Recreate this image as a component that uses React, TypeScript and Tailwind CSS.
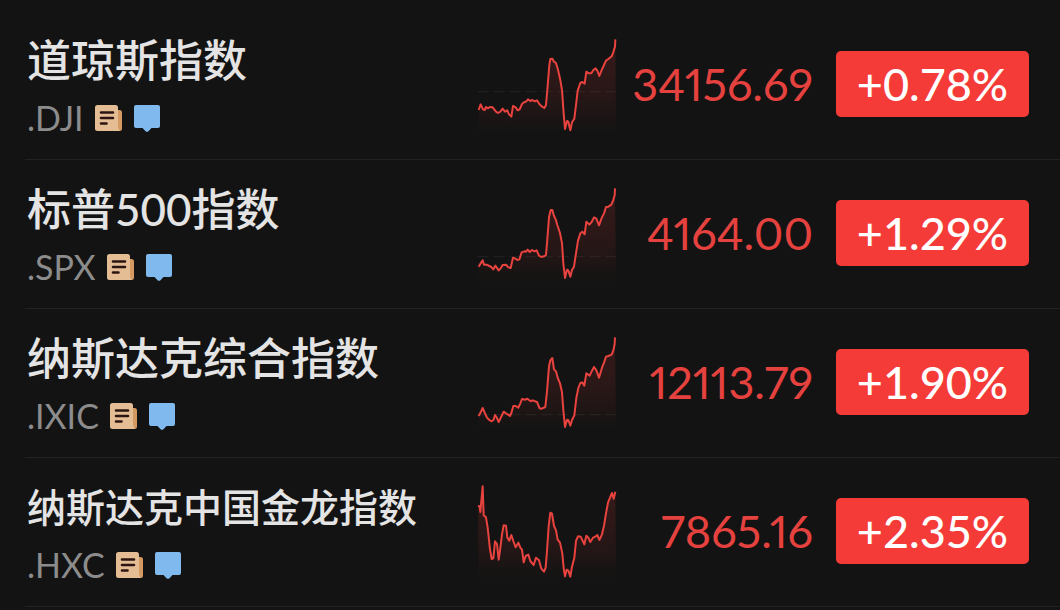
import React from "react";

type Quote = {
  name: string;
  code: string;
  price: string;
  change: string;
  compact?: boolean;
  chartTop: number;
  baseline: number;
  points: string;
};

const quotes: Quote[] = [
  {
    name: "道琼斯指数",
    code: ".DJI",
    price: "34156.69",
    change: "+0.78%",
    chartTop: 15,
    baseline: 185,
    points:
      "26,240 32,223 39,238 44,240 48,231 53,235 60,231 68,232 78,245 84,249 91,245 98,236 105,245 112,241 117,253 124,260 129,228 137,232 143,241 149,238 156,222 163,216 168,215 174,208 181,213 187,210 194,214 201,211 208,222 215,229 223,234 228,225 232,180 238,105 241,87 247,86 252,95 258,99 264,119 271,151 276,180 281,250 285,297 291,273 295,275 301,301 306,277 313,266 318,225 323,182 331,159 337,156 344,161 349,125 356,130 364,130 370,120 377,115 383,124 388,138 395,120 402,105 408,92 415,87 425,79 430,66 435,50 436,28",
  },
  {
    name: "标普500指数",
    code: ".SPX",
    price: "4164.00",
    change: "+1.29%",
    chartTop: 12,
    baseline: 230,
    points:
      "26,260 32,250 38,241 42,254 50,254 58,258 64,261 70,268 76,257 86,271 92,265 98,255 108,254 115,262 122,264 129,233 136,236 142,240 148,238 155,217 163,214 168,215 173,209 179,216 186,210 193,214 200,211 207,227 214,231 222,229 228,225 232,177 237,112 242,90 247,90 252,108 257,118 262,135 270,159 276,190 280,250 285,294 291,269 295,271 301,290 306,270 312,260 318,220 324,182 331,160 337,155 344,163 349,125 358,134 365,126 372,112 379,116 387,136 395,114 402,100 408,81 415,80 424,74 430,60 434,45 435,25",
  },
  {
    name: "纳斯达克综合指数",
    code: ".IXIC",
    price: "12113.79",
    change: "+1.90%",
    chartTop: 15,
    baseline: 260,
    points:
      "26,264 32,253 38,240 44,254 51,269 58,276 65,280 71,275 75,261 80,268 86,282 92,270 101,251 109,257 120,264 125,252 130,234 137,234 145,239 151,226 156,213 166,215 172,212 182,220 188,217 201,222 209,241 215,242 226,237 231,190 237,115 241,97 247,90 252,124 258,130 263,149 270,166 276,193 280,246 285,297 291,275 295,276 301,293 306,276 313,262 319,210 325,180 331,165 337,163 343,173 349,136 359,143 366,128 372,117 379,127 387,149 396,119 402,104 408,86 415,84 425,80 430,67 434,48 435,28",
  },
  {
    name: "纳斯达克中国金龙指数",
    code: ".HXC",
    price: "7865.16",
    change: "+2.35%",
    compact: true,
    chartTop: 18,
    baseline: 330,
    points:
      "24,90 29,91 31,108 34,75 38,31 41,118 48,124 53,155 60,220 65,249 70,247 75,196 81,204 86,251 90,224 96,175 101,148 108,149 112,185 118,194 124,177 131,198 137,214 145,200 151,215 156,221 161,259 167,240 175,236 181,255 191,267 198,245 207,253 214,278 222,287 227,275 231,225 236,150 241,110 246,113 252,150 258,163 263,191 270,200 277,233 281,276 285,301 290,281 295,284 301,302 306,272 313,245 318,195 324,181 332,182 343,205 349,179 355,185 361,198 369,185 376,182 382,177 388,192 396,175 402,149 408,112 414,80 422,60 426,51 431,68 436,47",
  },
];

function NewsIcon() {
  return (
    <svg className="h-[26px] w-7 shrink-0" viewBox="0 0 28 26" aria-hidden="true">
      <path d="M21 5h3.5A2.5 2.5 0 0 1 27 7.500V23.500A2.500 2.500 0 0 1 24.500 26H21z" fill="#d49a62" />
      <path d="M2.500 0H20.500A2.500 2.500 0 0 1 23 2.500V21q0 3 2 5H2.500A2.500 2.500 0 0 1 0 23.500V2.500A2.500 2.500 0 0 1 2.500 0z" fill="#e5bd95" />
      <path d="M6 7.500H18M6 13H18M6 18.500H11.500" stroke="#2b1512" strokeWidth="2.6" strokeLinecap="round" />
    </svg>
  );
}

function CommentIcon() {
  return (
    <svg className="h-[27px] w-[26px] shrink-0" viewBox="0 0 26 27" aria-hidden="true">
      <path
        d="M2 0H24A2 2 0 0 1 26 2V21A2 2 0 0 1 24 23H17.500L14.500 26.200Q13 27.500 11.500 26.200L8.500 23H2A2 2 0 0 1 0 21V2A2 2 0 0 1 2 0z"
        fill="#80b9ee"
      />
    </svg>
  );
}

function Sparkline({ quote }: { quote: Quote }) {
  const gradient = `fill${quote.code.replace(".", "-")}`;
  return (
    <svg
      className="mt-6 h-[100px] w-[138px] shrink-0 overflow-visible"
      viewBox={`24 ${quote.chartTop} 414 300`}
      aria-hidden="true"
    >
      <defs>
        <linearGradient id={gradient} gradientUnits="userSpaceOnUse" x1="0" y1="30" x2="0" y2="310">
          <stop offset="0" stopColor="#f23c3a" stopOpacity="0.17" />
          <stop offset="0.6" stopColor="#f23c3a" stopOpacity="0.09" />
          <stop offset="1" stopColor="#f23c3a" stopOpacity="0" />
        </linearGradient>
      </defs>
      {quote.baseline < 310 && (
        <path d={`M22 ${quote.baseline}H438`} stroke="#ffffff" strokeOpacity="0.06" strokeWidth="4" strokeDasharray="34 14" />
      )}
      <polygon points={`26,310 ${quote.points} 438,310`} fill={`url(#${gradient})`} />
      <polyline points={quote.points} fill="none" stroke="#e9433f" strokeWidth="6" strokeLinejoin="round" />
    </svg>
  );
}

function QuoteRow({ quote }: { quote: Quote }) {
  return (
    <li className="flex items-start border-b border-[#222222] pr-[31px] pb-[21px]">
      <div className="min-w-0 flex-1 pt-[25px] pl-0.5">
        <h2
          className={`whitespace-nowrap leading-[48px] font-medium text-[#e4e4e4] ${quote.compact ? "text-[39px]" : "text-[44px]"}`}
        >
          {quote.name}
        </h2>
        <div className="mt-3.5 flex items-center gap-[11px]">
          <span className="text-[34px] leading-10 text-[#8c8c8c]">{quote.code}</span>
          <NewsIcon />
          <CommentIcon />
        </div>
      </div>
      <Sparkline quote={quote} />
      <span className="mt-10 w-[197px] shrink-0 text-right text-[45px] leading-[66px] proportional-nums text-[#e5423f]">
        {quote.price}
      </span>
      <span className="mt-10 ml-[23px] w-[193px] shrink-0 rounded-[5px] bg-[#f43b38] text-center text-[45px] leading-[66px] font-medium text-white">
        {quote.change}
      </span>
    </li>
  );
}

export default function App() {
  return (
    <main className="min-h-screen bg-[#131313] pt-[11px] pl-[25px] font-[Lato,'Noto_Sans_CJK_SC',sans-serif]">
      <ul>
        {quotes.map((quote) => (
          <QuoteRow key={quote.code} quote={quote} />
        ))}
      </ul>
    </main>
  );
}
